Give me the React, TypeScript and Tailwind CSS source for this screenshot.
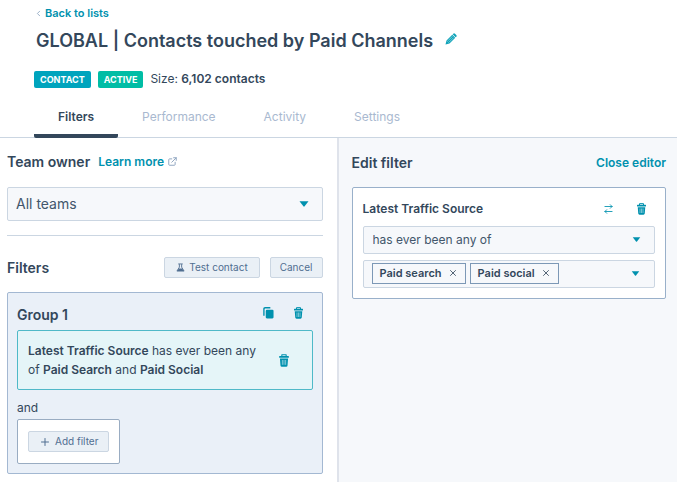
import React from 'react';
import { ChevronLeft, Plus, X } from 'lucide-react';

interface IconProps {
  className?: string;
}

const TrashIcon: React.FC<IconProps> = ({ className }) => (
  <svg viewBox="0 0 18 24" className={className} aria-hidden="true">
    <path d="M5 4V1.300h8V4" fill="none" stroke="currentColor" strokeWidth="2" strokeLinejoin="round" />
    <rect x="0" y="3.500" width="18" height="3.500" rx="1" fill="currentColor" />
    <path
      d="M1.500 8.500h15l-1 12.700a2.500 2.500 0 0 1-2.500 2.300H5a2.500 2.500 0 0 1-2.500-2.300z"
      fill="currentColor"
    />
    <path d="M6 11v9M9 11v9M12 11v9" stroke="#bfe5ec" strokeWidth="1.200" />
  </svg>
);

const PencilIcon: React.FC<IconProps> = ({ className }) => (
  <svg viewBox="0 0 24 24" className={className} aria-hidden="true">
    <path d="M1 23l2-8L9 21z" fill="currentColor" />
    <path d="M3 15 14.500 3.500l6 6L9 21z" fill="currentColor" />
    <path d="M6 15.500 15 6.500M8.500 18 17.500 9" stroke="#a8dfe6" strokeWidth="1.300" fill="none" />
    <path d="M16.500 1.500a2.500 2.500 0 0 1 3.500 0l2.500 2.500a2.500 2.500 0 0 1 0 3.500l-1.200 1.200-6-6z" fill="currentColor" />
  </svg>
);

const FlaskIcon: React.FC<IconProps> = ({ className }) => (
  <svg viewBox="0 0 24 24" className={className} aria-hidden="true">
    <path
      d="M6 2.500h12M9 3v8L2.500 21.500h19L15 11V3"
      fill="none"
      stroke="currentColor"
      strokeWidth="2.400"
      strokeLinejoin="round"
    />
    <path d="M7.500 14.500h9l4.500 7H3z" fill="currentColor" />
  </svg>
);

const CopyIcon: React.FC<IconProps> = ({ className }) => (
  <svg viewBox="0 0 24 26" className={className} aria-hidden="true">
    <path d="M2 19V4a2.500 2.500 0 0 1 2.500-2.500H16" fill="none" stroke="currentColor" strokeWidth="3" />
    <rect x="6" y="6" width="17" height="19" rx="2.500" fill="currentColor" />
  </svg>
);

const SwapIcon: React.FC<IconProps> = ({ className }) => (
  <svg
    viewBox="0 0 24 28"
    className={className}
    fill="none"
    stroke="currentColor"
    strokeWidth="2.400"
    strokeLinecap="round"
    strokeLinejoin="round"
    aria-hidden="true"
  >
    <path d="M2 7h20M17 2l5 5-5 5M22 21H2M7 16l-5 5 5 5" />
  </svg>
);

const ExternalIcon: React.FC<IconProps> = ({ className }) => (
  <svg
    viewBox="0 0 24 24"
    className={className}
    fill="none"
    stroke="currentColor"
    strokeWidth="2.600"
    strokeLinecap="round"
    strokeLinejoin="round"
    aria-hidden="true"
  >
    <path d="M10 5H4a2 2 0 0 0-2 2v13a2 2 0 0 0 2 2h13a2 2 0 0 0 2-2v-6M15 2h7v7M22 2 10 14" />
  </svg>
);

const Caret: React.FC<IconProps> = ({ className }) => (
  <svg viewBox="0 0 10 6" className={className} aria-hidden="true">
    <path d="M.5.3h9L5.600 5.300a.8.800 0 0 1-1.200 0z" fill="currentColor" />
  </svg>
);

const tabs = ['Filters', 'Performance', 'Activity', 'Settings'];
const sources = ['Paid search', 'Paid social'];

const Header: React.FC = () => (
  <header className="border-b border-[#cbd6e2] pl-[34px]">
    <a href="#lists" className="mt-[5px] flex h-4 w-fit items-center gap-0.5 text-[11px] font-semibold text-[#0091ae]">
      <ChevronLeft size={9} className="text-[#7c98b6]" />
      Back to lists
    </a>
    <div className="mt-2 flex h-6 items-center gap-3 pl-0.5">
      <h1 className="text-lg font-semibold whitespace-nowrap">GLOBAL | Contacts touched by Paid Channels</h1>
      <button type="button" aria-label="Edit name" className="pb-1 text-[#0fa3b9]">
        <PencilIcon className="size-3" />
      </button>
    </div>
    <div className="mt-4 flex h-5 items-center gap-[7px] text-xs">
      <span className="rounded-xs bg-[#00a4bd] px-1.5 text-[9px] leading-[17px] font-bold text-white">CONTACT</span>
      <span className="rounded-xs bg-[#00bda5] px-1.5 text-[9px] leading-[17px] font-bold text-white">ACTIVE</span>
      <p>
        Size: <strong className="font-semibold">6,102 contacts</strong>
      </p>
    </div>
    <nav className="mt-[15px] flex text-xs">
      {tabs.map((tab) => (
        <a
          key={tab}
          href={`#${tab.toLowerCase()}`}
          className={
            tab === 'Filters'
              ? '-mb-px h-[34px] rounded-xs border-b-4 border-[#33475b] px-6 pt-[5px] font-semibold'
              : 'h-[33px] px-6 pt-[5px] text-[#a9b9d0]'
          }
        >
          {tab}
        </a>
      ))}
    </nav>
  </header>
);

const FilterGroup: React.FC = () => (
  <section className="mt-3.5 rounded-xs border border-[#a3b8d2] bg-[#eaf0f8] px-[9px] pb-[9px]">
    <div className="flex h-[37px] items-center justify-between pt-1.5 pr-2.5">
      <h3 className="text-sm font-semibold">Group 1</h3>
      <div className="flex gap-5 pb-[3px] text-[#0091ae]">
        <button type="button" aria-label="Clone group">
          <CopyIcon className="h-3 w-[11px]" />
        </button>
        <button type="button" aria-label="Delete group">
          <TrashIcon className="h-3 w-[9px]" />
        </button>
      </div>
    </div>
    <div className="flex items-center justify-between rounded-xs border border-[#4fb9c8] bg-[#e5f5f8] py-2.5 pr-[23px] pl-2.5">
      <p className="max-w-60 text-xs leading-[19px]">
        <strong className="font-semibold">Latest Traffic Source</strong> has ever been any of{' '}
        <strong className="font-semibold">Paid Search</strong> and <strong className="font-semibold">Paid Social</strong>
      </p>
      <button type="button" aria-label="Delete filter" className="text-[#0091ae]">
        <TrashIcon className="h-[13px] w-2.5" />
      </button>
    </div>
    <p className="pt-2 pb-0.5 text-xs leading-[19px]">and</p>
    <div className="w-fit rounded-xs border border-[#99acc2] bg-white px-2.5 py-[11px]">
      <button
        type="button"
        className="flex h-[21px] items-center gap-1 rounded-xs border border-[#cbd6e2] bg-[#eaf0f6] px-2.5 text-[10px] text-[#506e91]"
      >
        <Plus size={12} />
        Add filter
      </button>
    </div>
  </section>
);

const FiltersPanel: React.FC = () => (
  <div className="border-r-2 border-[#dfe3eb] pr-3.5 pl-[7px]">
    <div className="flex h-[49px] items-center gap-2 pb-0.5">
      <h2 className="text-sm font-semibold">
        <label htmlFor="team">Team owner</label>
      </h2>
      <a href="#learn" className="flex items-center gap-1 text-xs font-semibold text-[#0091ae]">
        Learn more
        <ExternalIcon className="size-[9px] text-[#8fa5c0]" />
      </a>
    </div>
    <div className="relative">
      <select
        id="team"
        className="block h-[34px] w-full appearance-none rounded-xs border border-[#cbd6e2] bg-[#f6f8fb] px-2 text-sm text-[#42566b]"
      >
        <option>All teams</option>
      </select>
      <Caret className="pointer-events-none absolute top-3.5 right-3.5 h-[6px] w-2.5 text-[#0091ae]" />
    </div>
    <hr className="mt-3.5 border-[#cbd6e2]" />
    <div className="mt-[21px] flex h-[21px] items-center">
      <h2 className="mr-auto text-sm font-semibold">Filters</h2>
      <div className="flex gap-2.5 text-[10px] text-[#506e91]">
        <button
          type="button"
          className="flex h-[21px] items-center gap-1 rounded-xs border border-[#cbd6e2] bg-[#eaf0f6] px-[11px]"
        >
          <FlaskIcon className="size-[9px]" />
          Test contact
        </button>
        <button type="button" className="h-[21px] rounded-xs border border-[#cbd6e2] bg-[#eaf0f6] px-[9px]">
          Cancel
        </button>
      </div>
    </div>
    <FilterGroup />
  </div>
);

const EditorPanel: React.FC = () => (
  <div className="bg-[#f6f8fb] pr-[11px] pl-[13px]">
    <div className="flex h-[49px] items-center justify-between">
      <h2 className="text-sm font-semibold">Edit filter</h2>
      <button type="button" className="text-xs font-semibold text-[#0091ae]">
        Close editor
      </button>
    </div>
    <section className="rounded-xs border border-[#99b0ca] bg-white px-2.5 pb-2.5">
      <div className="flex h-[38px] items-center justify-between pt-1 pr-[9px]">
        <h3 className="text-xs font-semibold">Latest Traffic Source</h3>
        <div className="flex items-center gap-6 text-[#0091ae]">
          <button type="button" aria-label="Replace property">
            <SwapIcon className="h-2.5 w-[9px]" />
          </button>
          <button type="button" aria-label="Delete filter">
            <TrashIcon className="h-3 w-[9px]" />
          </button>
        </div>
      </div>
      <div className="relative">
        <select
          aria-label="Operator"
          className="block h-7 w-full appearance-none rounded-xs border border-[#cbd6e2] bg-[#f6f8fb] px-[9px] text-xs text-[#42566b]"
        >
          <option>has ever been any of</option>
        </select>
        <Caret className="pointer-events-none absolute top-[11px] right-3.5 h-[5px] w-[9px] text-[#0091ae]" />
      </div>
      <div className="mt-1.5 flex h-7 items-center gap-1 rounded-xs border border-[#cbd6e2] bg-[#f6f8fb] pr-3.5 pb-0.5 pl-2">
        {sources.map((source) => (
          <span
            key={source}
            className="flex h-[21px] items-center gap-1.5 border border-[#7c98b6] px-[7px] text-[11px] font-semibold whitespace-nowrap"
          >
            {source}
            <button type="button" aria-label={`Remove ${source}`}>
              <X size={10} strokeWidth={2} />
            </button>
          </span>
        ))}
        <button type="button" aria-label="Show sources" className="ml-auto text-[#0091ae]">
          <Caret className="h-[5px] w-[9px]" />
        </button>
      </div>
    </section>
  </div>
);

const App: React.FC = () => {
  return (
    <div className="flex min-h-screen flex-col overflow-hidden bg-white font-['Inter','Liberation_Sans',sans-serif] text-[#33475b]">
      <Header />
      <main className="grid grow grid-cols-2">
        <FiltersPanel />
        <EditorPanel />
      </main>
    </div>
  );
};

export default App;
